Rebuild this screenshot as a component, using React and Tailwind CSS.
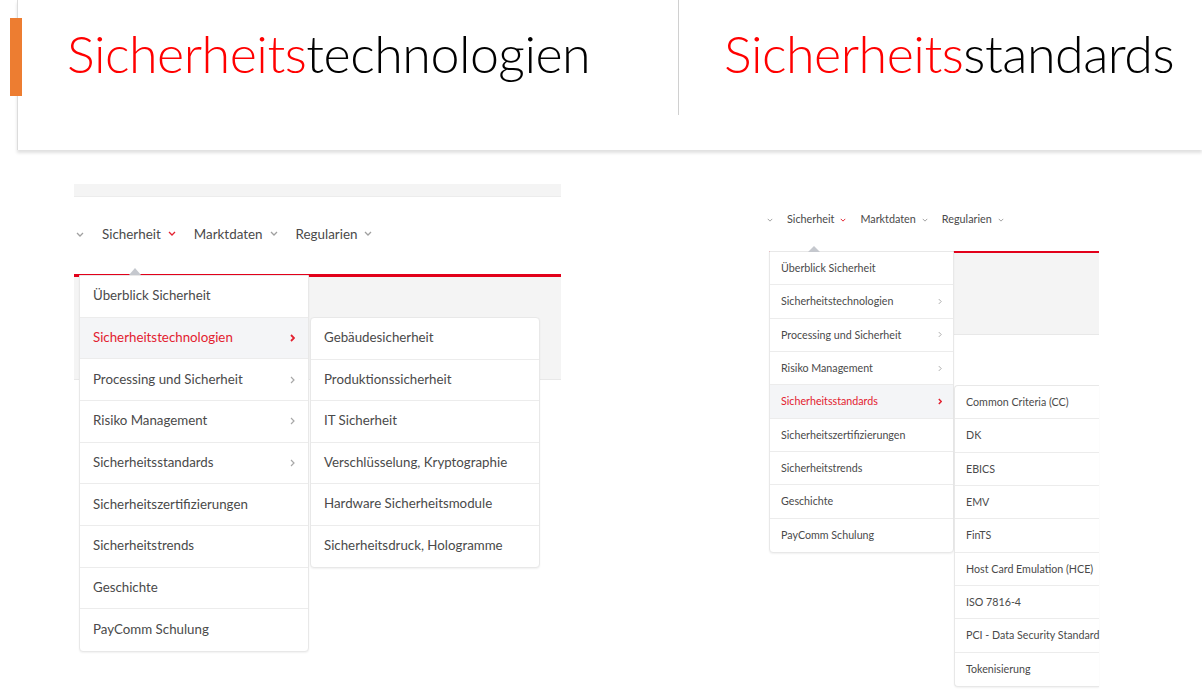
import { Fragment } from 'react'

const MAIN = [
  'Überblick Sicherheit',
  'Sicherheitstechnologien',
  'Processing und Sicherheit',
  'Risiko Management',
  'Sicherheitsstandards',
  'Sicherheitszertifizierungen',
  'Sicherheitstrends',
  'Geschichte',
  'PayComm Schulung',
]
const HAS_SUB = ['Sicherheitstechnologien', 'Processing und Sicherheit', 'Risiko Management', 'Sicherheitsstandards']

const TECH = [
  'Gebäudesicherheit',
  'Produktionssicherheit',
  'IT Sicherheit',
  'Verschlüsselung, Kryptographie',
  'Hardware Sicherheitsmodule',
  'Sicherheitsdruck, Hologramme',
]
const STANDARDS = [
  'Common Criteria (CC)',
  'DK',
  'EBICS',
  'EMV',
  'FinTS',
  'Host Card Emulation (HCE)',
  'ISO 7816-4',
  'PCI - Data Security Standard',
  'Tokenisierung',
]

// literal class sets for the two screenshot sizes
const BIG = {
  panel: 'w-[487px] ml-[74px] mt-[34px]',
  strip: 'h-[13px] bg-[#f4f4f4] border-b border-[#ececec]',
  nav: 'h-[77px] pb-[3px] pl-[2px] text-[13.4px]',
  navItem: 'gap-[7px] ml-[18px]',
  chevDown: [8, 5],
  caret: 'left-[49px] -top-[8px] border-l-[6px] border-r-[6px] border-b-[7px]',
  line: 'h-[3px]',
  gray: 'h-[103px]',
  menu: 'top-[1px] left-[5px] w-[230px]',
  row: 'h-[41.67px] px-[13px] text-[13.3px]',
  chevRight: [5, 8],
  sub: 'top-[43px] left-[236px] w-[230px] border rounded-[4px]',
  subRow: 'h-[41.5px] px-[13px] text-[13.3px]',
}
const SMALL = {
  panel: 'w-[330px] ml-[208px] mt-[40px]',
  strip: 'h-0',
  nav: 'h-[61px] pb-[2px] -ml-[2px] text-[10.8px]',
  navItem: 'gap-[6px] ml-[14px]',
  chevDown: [6, 4],
  caret: 'left-[38px] -top-[6px] border-l-[6px] border-r-[6px] border-b-[6px]',
  line: 'h-[2px]',
  gray: 'h-[82px]',
  menu: 'top-0 left-0 w-[185px]',
  row: 'h-[33.33px] px-[11px] text-[10.7px]',
  chevRight: [4, 7],
  // the screenshot is cut off at the right edge of the submenu
  sub: 'top-[134px] left-[185px] w-[145px] border border-r-0 rounded-l-[4px]',
  subRow: 'h-[33.33px] pl-[11px] text-[10.7px]',
}

function Down({ size, className }) {
  const [w, h] = size
  return (
    <svg width={w} height={h} viewBox="0 0 8 5" className={className}>
      <path d="M1 1l3 3 3-3" stroke="currentColor" strokeWidth="1.3" fill="none" />
    </svg>
  )
}

function Right({ size, active }) {
  const [w, h] = size
  return (
    <svg width={w} height={h} viewBox="0 0 5 8" className={active ? 'text-[#e3212f]' : 'text-[#a8a8a8]'}>
      <path d="M1 1l3 3-3 3" stroke="currentColor" strokeWidth={active ? 1.8 : 1.2} fill="none" />
    </svg>
  )
}

function Panel({ s, active, sub }) {
  return (
    <div className={`${s.panel} shrink-0 font-['Lato','Liberation_Sans',sans-serif] text-[#4a4a4a]`}>
      <div className={s.strip} />
      <nav className={`flex items-center ${s.nav}`}>
        <Down size={s.chevDown} className="text-[#a0a0a0]" />
        {['Sicherheit', 'Marktdaten', 'Regularien'].map((label, i) => (
          <span key={label} className={`flex items-center ${s.navItem}`}>
            {label}
            <Down size={s.chevDown} className={i === 0 ? 'text-[#e3212f]' : 'text-[#a0a0a0]'} />
          </span>
        ))}
      </nav>
      <div className="relative">
        <div className={`${s.line} bg-[#e2001a]`} />
        <div className={`${s.gray} bg-[#f4f4f4] border-b border-[#e8e8e8]`} />

        <div className={`absolute ${s.menu} bg-white border border-[#e8e8e8] rounded-b-[4px] shadow-[0_1px_2px_rgba(0,0,0,0.06)]`}>
          <span className={`absolute ${s.caret} w-0 h-0 border-l-transparent border-r-transparent border-b-[#c5c8ce]`} />
          {MAIN.map((item, i) => {
            const on = item === active
            return (
              <div
                key={item}
                className={`flex items-center justify-between ${s.row} ${i < MAIN.length - 1 ? 'border-b border-[#ececec]' : ''} ${on ? 'bg-[#f4f5f7] text-[#e3212f]' : ''}`}
              >
                <span>{item}</span>
                {HAS_SUB.includes(item) && <Right size={s.chevRight} active={on} />}
              </div>
            )
          })}
        </div>

        <div className={`absolute ${s.sub} bg-white border-[#e8e8e8] shadow-[0_1px_2px_rgba(0,0,0,0.06)]`}>
          {sub.map((item, i) => (
            <Fragment key={item}>
              <div className={`flex items-center whitespace-nowrap ${s.subRow} ${i < sub.length - 1 ? 'border-b border-[#ececec]' : ''}`}>
                {item}
              </div>
            </Fragment>
          ))}
        </div>
      </div>
    </div>
  )
}

function Title({ accent, rest }) {
  return (
    <h1 className="font-['Lato','Liberation_Sans',sans-serif] font-light text-[52px] leading-none tracking-[-0.5px] text-black">
      <span className="text-[#ff0000]">{accent}</span>
      {rest}
    </h1>
  )
}

export default function App() {
  return (
    <div className="relative w-[1202px] h-[691px] overflow-hidden bg-white">
      <header className="relative h-[150px]">
        <div className="ml-[17px] h-[150px] flex border-l border-[#dcdcdc] bg-white shadow-[0_3px_3px_rgba(0,0,0,0.12)]">
          <div className="w-[660px] shrink-0 pl-[49px] pt-[27px]">
            <Title accent="Sicherheits" rest="technologien" />
          </div>
          <div className="w-px h-[115px] bg-[#d0d0d0]" />
          <div className="pl-[45px] pt-[27px]">
            <Title accent="Sicherheits" rest="standards" />
          </div>
        </div>
        <div className="absolute left-[10px] top-[18px] w-[12px] h-[78px] bg-[#ed7d31]" />
      </header>

      <main className="flex items-start">
        <Panel s={BIG} active="Sicherheitstechnologien" sub={TECH} />
        <Panel s={SMALL} active="Sicherheitsstandards" sub={STANDARDS} />
      </main>
    </div>
  )
}
